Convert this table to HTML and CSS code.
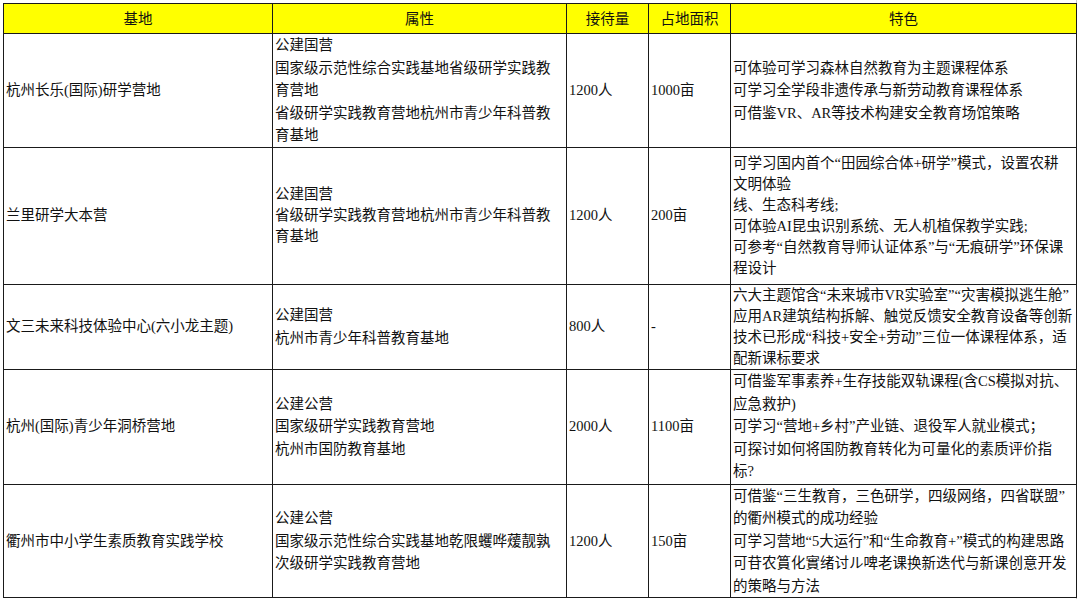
FILE: index.html
```html
<!DOCTYPE html>
<html lang="zh-CN">
<head>
<meta charset="utf-8">
<link rel="stylesheet" href="styles.css">
</head>
<body>
<div class="sheet">
<table class="grid">
  <colgroup>
    <col class="c1"><col class="c2"><col class="c3"><col class="c4"><col class="c5">
  </colgroup>
  <thead>
    <tr class="head">
      <th>基地</th><th>属性</th><th>接待量</th><th>占地面积</th><th>特色</th>
    </tr>
  </thead>
  <tbody>
    <tr class="r1">
      <td>杭州长乐(国际)研学营地</td>
      <td>公建国营<br>国家级示范性综合实践基地省级研学实践教<br>育营地<br>省级研学实践教育营地杭州市青少年科普教<br>育基地</td>
      <td>1200人</td>
      <td>1000亩</td>
      <td>可体验可学习森林自然教育为主题课程体系<br>可学习全学段非遗传承与新劳动教育课程体系<br>可借鉴VR、AR等技术构建安全教育场馆策略</td>
    </tr>
    <tr class="r2">
      <td>兰里研学大本营</td>
      <td class="tight">公建国营<br>省级研学实践教育营地杭州市青少年科普教<br>育基地</td>
      <td>1200人</td>
      <td>200亩</td>
      <td class="tight">可学习国内首个“田园综合体+研学”模式，设置农耕<br>文明体验<br>线、生态科考线;<br>可体验AI昆虫识别系统、无人机植保教学实践;<br>可参考“自然教育导师认证体系”与“无痕研学”环保课<br>程设计</td>
    </tr>
    <tr class="r3">
      <td>文三未来科技体验中心(六小龙主题)</td>
      <td>公建国营<br>杭州市青少年科普教育基地</td>
      <td>800人</td>
      <td>-</td>
      <td class="tight">六大主题馆含“未来城市VR实验室”“灾害模拟逃生舱”<br>应用AR建筑结构拆解、触觉反馈安全教育设备等创新<br>技术已形成“科技+安全+劳动”三位一体课程体系，适<br>配新课标要求</td>
    </tr>
    <tr class="r4">
      <td>杭州(国际)青少年洞桥营地</td>
      <td>公建公营<br>国家级研学实践教育营地<br>杭州市国防教育基地</td>
      <td>2000人</td>
      <td>1100亩</td>
      <td>可借鉴军事素养+生存技能双轨课程(含CS模拟对抗、<br>应急救护)<br>可学习“营地+乡村”产业链、退役军人就业模式；<br>可探讨如何将国防教育转化为可量化的素质评价指<br>标?</td>
    </tr>
    <tr class="r5">
      <td>衢州市中小学生素质教育实践学校</td>
      <td>公建公营<br>国家级示范性综合实践基地乾限蠼哗蕿靓孰<br>次级研学实践教育营地</td>
      <td>1200人</td>
      <td>150亩</td>
      <td>可借鉴“三生教育，三色研学，四级网络，四省联盟”<br>的衢州模式的成功经验<br>可学习营地“5大运行”和“生命教育+”模式的构建思路<br>可苷农篔化實绪讨ル啤老课换新迭代与新课创意开发<br>的策略与方法</td>
    </tr>
  </tbody>
</table>
<div class="gutter"></div>
</div>
</body>
</html>
```

FILE: styles.css
```css
html, body {
  margin: 0;
  padding: 0;
  background: #ffffff;
}

body {
  font-family: "Liberation Serif", "Noto Sans CJK SC", serif;
  font-size: 14.5px;
  color: #111111;
  width: 1080px;
  height: 599px;
  overflow: hidden;
}

.sheet {
  padding: 3px 0 0 3px;
  width: 1077px;
  border-right: 1px solid #c8c8c8;
  box-sizing: border-box;
  height: 599px;
}

.grid {
  border-collapse: collapse;
  table-layout: fixed;
  width: 1073px;
}

.c1 { width: 269px; }
.c2 { width: 294px; }
.c3 { width: 82px; }
.c4 { width: 82px; }
.c5 { width: 346px; }

.grid th,
.grid td {
  border: 1px solid #1a1a1a;
  padding: 0 0 0 2px;
  vertical-align: middle;
  line-height: 22.5px;
  white-space: nowrap;
  overflow: hidden;
  text-align: left;
  font-weight: normal;
}

.grid th {
  background: #ffff00;
  text-align: center;
  padding: 0;
  line-height: 20px;
}

.grid td.tight {
  line-height: 21px;
}

.head { height: 30px; }
.r1 { height: 113px; }
.r2 { height: 137px; }
.r3 { height: 84px; }
.r4 { height: 115px; }
.r5 { height: 112px; }

.gutter {
  height: 2px;
  margin-top: 1px;
  background: #b8b8b8;
  width: 1073px;
}
```
